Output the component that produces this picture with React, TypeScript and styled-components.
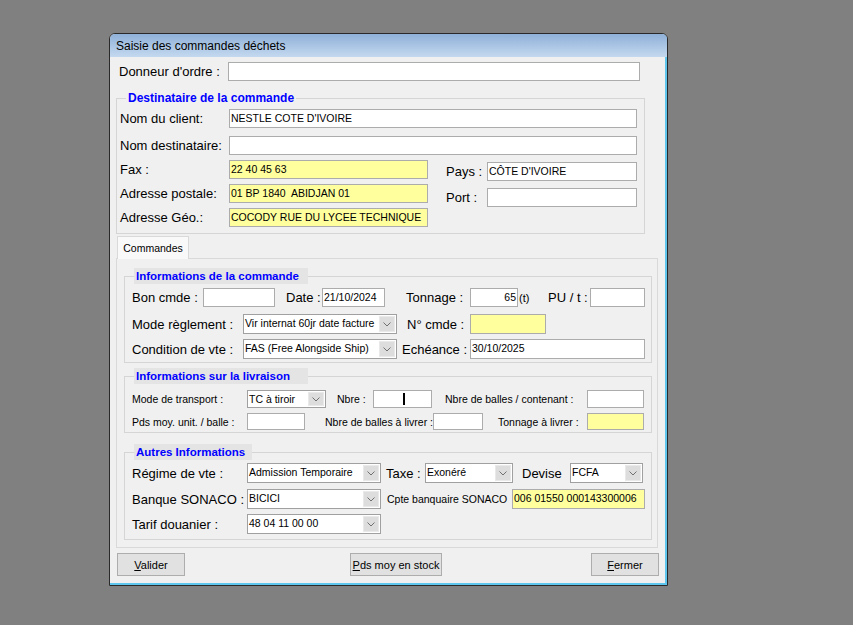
import React from "react";
import styled, { createGlobalStyle } from "styled-components";

const Global = createGlobalStyle`
  html, body { margin: 0; padding: 0; background: #808080; }
  body { font-family: "Liberation Sans", Arial, sans-serif; color: #000; }
  * { box-sizing: border-box; }
`;

const Page = styled.div`
  padding: 33px 0 0 109px;
  height: 625px;
`;

const Window = styled.div`
  width: 559px;
  height: 553px;
  background: #f0f0f0;
  border: 1px solid #2a2a2a;
  border-radius: 6px 6px 0 0;
  box-shadow: inset -2px -2px 0 #5ec6ec;
  display: flex;
  flex-direction: column;
  overflow: hidden;
`;

const TitleBar = styled.div`
  height: 23px;
  flex-shrink: 0;
  background: linear-gradient(#8fb0d8, #c4d9ef);
  display: flex;
  align-items: center;
  padding-left: 6px;
  font-size: 12px;
  color: #000;
`;

const Body = styled.div`
  display: flex;
  flex-direction: column;
  padding-top: 5px;
`;

const Row = styled.div<{ $mt?: number; $pl?: number }>`
  display: flex;
  align-items: center;
  margin-top: ${(p) => p.$mt ?? 0}px;
  padding-left: ${(p) => p.$pl ?? 0}px;
`;

const Label = styled.span<{ $w?: number; $size?: number; $ml?: number }>`
  display: inline-block;
  flex-shrink: 0;
  width: ${(p) => (p.$w ? `${p.$w}px` : "auto")};
  margin-left: ${(p) => p.$ml ?? 0}px;
  font-size: ${(p) => p.$size ?? 13}px;
  white-space: nowrap;
  color: #000;
`;

const Box = styled.div<{ $w: number; $h?: number; $yellow?: boolean; $right?: boolean; $ml?: number }>`
  flex-shrink: 0;
  width: ${(p) => p.$w}px;
  height: ${(p) => p.$h ?? 19}px;
  margin-left: ${(p) => p.$ml ?? 0}px;
  background: ${(p) => (p.$yellow ? "#ffff9e" : "#ffffff")};
  border: 1px solid #acacac;
  font-size: 10.5px;
  line-height: 14px;
  padding: 1px 1px 0 1px;
  white-space: nowrap;
  overflow: hidden;
  text-align: ${(p) => (p.$right ? "right" : "left")};
`;

const Caret = styled.span<{ $ml: number }>`
  display: inline-block;
  width: 2px;
  height: 12px;
  margin-left: ${(p) => p.$ml}px;
  margin-top: 1px;
  background: #000;
  vertical-align: top;
`;

const ComboBox = styled.div<{ $w: number; $h?: number; $ml?: number }>`
  flex-shrink: 0;
  display: flex;
  width: ${(p) => p.$w}px;
  height: ${(p) => p.$h ?? 20}px;
  margin-left: ${(p) => p.$ml ?? 0}px;
  background: #fff;
  border: 1px solid #a0a0a0;
`;

const ComboText = styled.div<{ $size?: number }>`
  flex: 1;
  font-size: ${(p) => p.$size ?? 10.5}px;
  line-height: 14px;
  padding: 1px 0 0 1px;
  white-space: nowrap;
  overflow: hidden;
`;

const ComboButton = styled.div`
  width: 16px;
  flex-shrink: 0;
  margin: 1px;
  background: #dddddd;
  border: 1px solid #e9e9e9;
  display: flex;
  align-items: center;
  justify-content: center;
`;

const Combo: React.FC<{ w: number; h?: number; ml?: number; value: string; size?: number }> = ({ w, h, ml, value, size }) => (
  <ComboBox $w={w} $h={h} $ml={ml}>
    <ComboText $size={size}>{value}</ComboText>
    <ComboButton>
      <svg width="8" height="5" viewBox="0 0 8 5">
        <path d="M0.5 0.5 L4 4 L7.5 0.5" fill="none" stroke="#707070" strokeWidth="1" />
      </svg>
    </ComboButton>
  </ComboBox>
);

const Group = styled.div<{ $w: number; $ml: number; $mt: number; $pad: string }>`
  position: relative;
  width: ${(p) => p.$w}px;
  margin-left: ${(p) => p.$ml}px;
  margin-top: ${(p) => p.$mt}px;
  padding: ${(p) => p.$pad};
  border: 1px solid #d5d5d5;
  flex-shrink: 0;
`;

const Legend = styled.div<{ $w?: number; $left: number; $bg: string; $size: number }>`
  position: absolute;
  top: -9px;
  left: ${(p) => p.$left}px;
  width: ${(p) => (p.$w ? `${p.$w}px` : "auto")};
  height: 16px;
  padding: 0 2px;
  background: ${(p) => p.$bg};
  color: #0000ff;
  font-weight: bold;
  font-size: ${(p) => p.$size}px;
  line-height: 16px;
  white-space: nowrap;
`;

const Columns = styled.div`
  display: flex;
  margin-top: 5px;
`;

const Column = styled.div<{ $ml?: number }>`
  display: flex;
  flex-direction: column;
  margin-left: ${(p) => p.$ml ?? 0}px;
`;

const TabStrip = styled.div`
  display: flex;
  margin: 2px 0 0 7px;
  position: relative;
  z-index: 1;
`;

const Tab = styled.div`
  width: 72px;
  height: 23px;
  margin-bottom: -1px;
  background: #f9f9f9;
  border: 1px solid #d9d9d9;
  border-bottom: none;
  font-size: 10.5px;
  display: flex;
  align-items: center;
  justify-content: center;
`;

const Panel = styled.div`
  width: 542px;
  margin-left: 6px;
  border: 1px solid #d9d9d9;
  padding: 17px 0 7px 7px;
  display: flex;
  flex-direction: column;
`;

const Buttons = styled.div`
  display: flex;
  margin-top: 5px;
  padding: 0 7px;
`;

const Button = styled.button<{ $w: number; $ml?: number }>`
  width: ${(p) => p.$w}px;
  height: 23px;
  margin-left: ${(p) => p.$ml ?? 0}px;
  background: #e1e1e1;
  border: 1px solid #adadad;
  font-family: "Liberation Sans", Arial, sans-serif;
  font-size: 11px;
  color: #000;
  padding: 0;
`;

export default function App() {
  return (
    <>
      <Global />
      <Page>
        <Window>
          <TitleBar>Saisie des commandes déchets</TitleBar>
          <Body>
            <Row $pl={9}>
              <Label $w={109}>Donneur d'ordre :</Label>
              <Box $w={412} />
            </Row>

            <Group $w={529} $ml={6} $mt={17} $pad="10px 0 6px 3px">
              <Legend $left={9} $bg="#f0f0f0" $size={12}>Destinataire de la commande</Legend>
              <Row>
                <Label $w={109}>Nom du client:</Label>
                <Box $w={408}>NESTLE COTE D'IVOIRE</Box>
              </Row>
              <Row $mt={8}>
                <Label $w={109}>Nom destinataire:</Label>
                <Box $w={408} />
              </Row>
              <Columns>
                <Column>
                  <Row>
                    <Label $w={109}>Fax :</Label>
                    <Box $w={199} $yellow>22 40 45 63</Box>
                  </Row>
                  <Row $mt={5}>
                    <Label $w={109}>Adresse postale:</Label>
                    <Box $w={199} $yellow>01 BP 1840&nbsp; ABIDJAN 01</Box>
                  </Row>
                  <Row $mt={5}>
                    <Label $w={109}>Adresse Géo.:</Label>
                    <Box $w={199} $yellow>COCODY RUE DU LYCEE TECHNIQUE</Box>
                  </Row>
                </Column>
                <Column $ml={18}>
                  <Row $mt={2}>
                    <Label $w={41}>Pays :</Label>
                    <Box $w={150}>CÔTE D'IVOIRE</Box>
                  </Row>
                  <Row $mt={7}>
                    <Label $w={41}>Port :</Label>
                    <Box $w={150} />
                  </Row>
                </Column>
              </Columns>
            </Group>

            <TabStrip>
              <Tab>Commandes</Tab>
            </TabStrip>
            <Panel>
              <Group $w={528} $ml={0} $mt={0} $pad="11px 0 3px 7px">
                <Legend $left={9} $w={174} $bg="#e4e4e4" $size={11.5}>Informations de la commande</Legend>
                <Row>
                  <Label $w={71}>Bon cmde :</Label>
                  <Box $w={72} />
                  <Label $w={36} $ml={11}>Date :</Label>
                  <Box $w={63}>21/10/2024</Box>
                  <Label $w={64} $ml={21}>Tonnage :</Label>
                  <Box $w={48} $right>65</Box>
                  <Label $w={29} $size={11} $ml={1}>(t)</Label>
                  <Label $w={42}>PU / t :</Label>
                  <Box $w={55} />
                </Row>
                <Row $mt={7}>
                  <Label $w={111}>Mode règlement :</Label>
                  <Combo w={154} value="Vir internat 60jr date facture" />
                  <Label $w={63} $ml={10}>N° cmde :</Label>
                  <Box $w={76} $h={20} $yellow />
                </Row>
                <Row $mt={5}>
                  <Label $w={111}>Condition de vte :</Label>
                  <Combo w={154} value="FAS (Free Alongside Ship)" />
                  <Label $w={68} $ml={5}>Echéance :</Label>
                  <Box $w={175} $h={20}>30/10/2025</Box>
                </Row>
              </Group>

              <Group $w={528} $ml={0} $mt={13} $pad="13px 0 2px 7px">
                <Legend $left={9} $w={174} $bg="#e4e4e4" $size={11.5}>Informations sur la livraison</Legend>
                <Row>
                  <Label $w={115} $size={10.5}>Mode de transport :</Label>
                  <Combo w={79} h={18} value="TC à tiroir" />
                  <Label $w={36} $size={10.5} $ml={11}>Nbre :</Label>
                  <Box $w={59} $h={18}><Caret $ml={28} /></Box>
                  <Label $w={142} $size={10.5} $ml={13}>Nbre de balles / contenant :</Label>
                  <Box $w={57} $h={18} />
                </Row>
                <Row $mt={5}>
                  <Label $w={115} $size={10.5}>Pds moy. unit. / balle :</Label>
                  <Box $w={58} $h={17} />
                  <Label $w={108} $size={10.5} $ml={20}>Nbre de balles à livrer :</Label>
                  <Box $w={50} $h={17} />
                  <Label $w={89} $size={10.5} $ml={15}>Tonnage à livrer :</Label>
                  <Box $w={57} $h={17} $yellow />
                </Row>
              </Group>

              <Group $w={528} $ml={0} $mt={19} $pad="10px 0 5px 7px">
                <Legend $left={9} $w={118} $bg="#e4e4e4" $size={11.5}>Autres Informations</Legend>
                <Row>
                  <Label $w={115}>Régime de vte :</Label>
                  <Combo w={134} value="Admission Temporaire" />
                  <Label $w={39} $ml={5}>Taxe :</Label>
                  <Combo w={88} value="Exonéré" />
                  <Label $w={48} $ml={9}>Devise</Label>
                  <Combo w={73} value="FCFA" />
                </Row>
                <Row $mt={6}>
                  <Label $w={115}>Banque SONACO :</Label>
                  <Combo w={134} value="BICICI" />
                  <Label $w={125} $size={10.5} $ml={6}>Cpte banquaire SONACO</Label>
                  <Box $w={133} $h={20} $yellow>006 01550 000143300006</Box>
                </Row>
                <Row $mt={5}>
                  <Label $w={115}>Tarif douanier :</Label>
                  <Combo w={134} value="48 04 11 00 00" />
                </Row>
              </Group>
            </Panel>

            <Buttons>
              <Button $w={68}><u>V</u>alider</Button>
              <Button $w={92} $ml={165}><u>P</u>ds moy en stock</Button>
              <Button $w={68} $ml={149}><u>F</u>ermer</Button>
            </Buttons>
          </Body>
        </Window>
      </Page>
    </>
  );
}
